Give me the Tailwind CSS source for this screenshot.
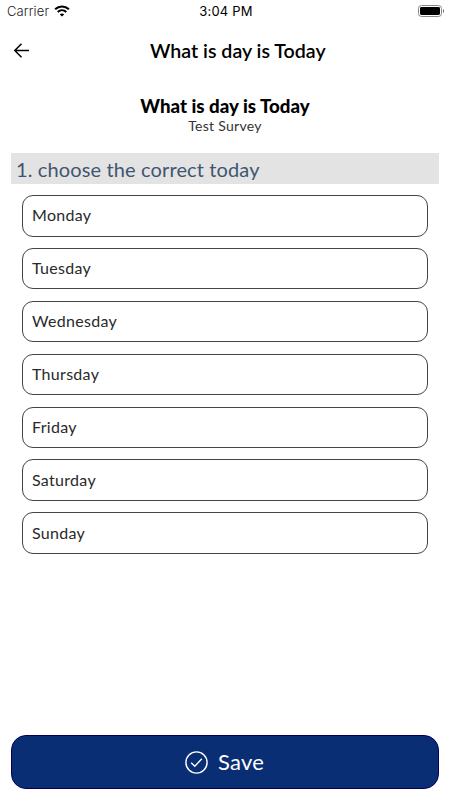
<!DOCTYPE html>
<html lang="en">
<head>
<meta charset="utf-8">
<title>Survey</title>
<script src="https://cdn.jsdelivr.net/npm/@tailwindcss/browser@4"></script>
</head>
<body class="bg-white">
<div class="w-[450px] h-[800px] flex flex-col overflow-hidden bg-white text-black font-['Lato',sans-serif]">
  <div class="h-6 pb-[2px] grid grid-cols-3 items-center pl-[7px] pr-[5px] font-['Inter',sans-serif] text-[13px] leading-[22px] shrink-0">
    <div class="flex items-center gap-[5px]">
      <span class="text-[#222] font-light tracking-[0.1px]">Carrier</span>
      <svg class="w-4 h-[12px]" viewBox="0 0 16 12"><path d="M1.1 4.3C5 .5 11 .5 14.9 4.3M3.7 7c2.5-2.3 6.1-2.3 8.6 0" fill="none" stroke="#000" stroke-width="2.1"/><path d="M8 11.5 5.8 9.4c1.2-1.1 3.2-1.1 4.4 0z"/></svg>
    </div>
    <span class="text-center tracking-[0.2px]">3:04 PM</span>
    <svg class="w-[27px] h-3 justify-self-end" viewBox="0 0 27 12"><rect x=".5" y=".5" width="23" height="11" rx="3" fill="#fff" stroke="#888"/><rect x="2" y="2" width="20" height="8" rx="1.4"/><path d="M25 4v4c1.5-.6 1.5-3.4 0-4z" fill="#777"/></svg>
  </div>
  <header class="h-[54px] flex items-center pl-3 shrink-0">
    <svg class="w-[18px] h-[18px]" viewBox="0 0 18 18" fill="none" stroke="#000" stroke-width="1.5"><path d="M17 8.5H3M9.5 1.7 2.8 8.5l6.7 6.8"/></svg>
    <h1 class="ml-[120px] text-[19.6px] font-semibold whitespace-nowrap">What is day is Today</h1>
  </header>
  <div class="pt-[17px] h-[75px] text-center shrink-0">
    <h2 class="text-[18.7px] leading-[22px] font-black whitespace-nowrap">What is day is Today</h2>
    <p class="text-[14px] leading-[18px] tracking-[0.3px] text-[#333]">Test Survey</p>
  </div>
  <div class="mx-[11px] h-[31px] shrink-0 bg-[#e3e3e3] pl-[5px] flex items-center text-[20px] tracking-[0.13px] text-[#40566f] whitespace-nowrap"><span>1. choose the correct today</span></div>
  <main class="mx-[22px] mt-[11px] flex flex-col gap-[11.4px] text-[16px] tracking-[0.3px] text-[#2a2a2a]">
    <div class="h-[41.5px] border border-[#444] rounded-[11px] pl-[9px] pb-[1px] flex items-center">Monday</div>
    <div class="h-[41.5px] border border-[#444] rounded-[11px] pl-[9px] pb-[1px] flex items-center">Tuesday</div>
    <div class="h-[41.5px] border border-[#444] rounded-[11px] pl-[9px] pb-[1px] flex items-center">Wednesday</div>
    <div class="h-[41.5px] border border-[#444] rounded-[11px] pl-[9px] pb-[1px] flex items-center">Thursday</div>
    <div class="h-[41.5px] border border-[#444] rounded-[11px] pl-[9px] pb-[1px] flex items-center">Friday</div>
    <div class="h-[41.5px] border border-[#444] rounded-[11px] pl-[9px] pb-[1px] flex items-center">Saturday</div>
    <div class="h-[41.5px] border border-[#444] rounded-[11px] pl-[9px] pb-[1px] flex items-center">Sunday</div>
  </main>
  <button class="mt-auto mb-[11px] mx-[11px] h-[54px] shrink-0 rounded-[15px] border border-[#00005c] bg-[#0a2e73] text-white flex items-center justify-center gap-[10px] pr-[1px] text-[22px]">
    <svg class="w-[23px] h-[23px]" viewBox="0 0 23 23" fill="none" stroke="#fff" stroke-width="1.4"><circle cx="11.5" cy="11.5" r="10.6"/><path d="m6.2 11.8 3.6 3.5 7-7.5"/></svg>
    <span class="pb-[2px] tracking-[0.2px]">Save</span>
  </button>
</div>
</body>
</html>
